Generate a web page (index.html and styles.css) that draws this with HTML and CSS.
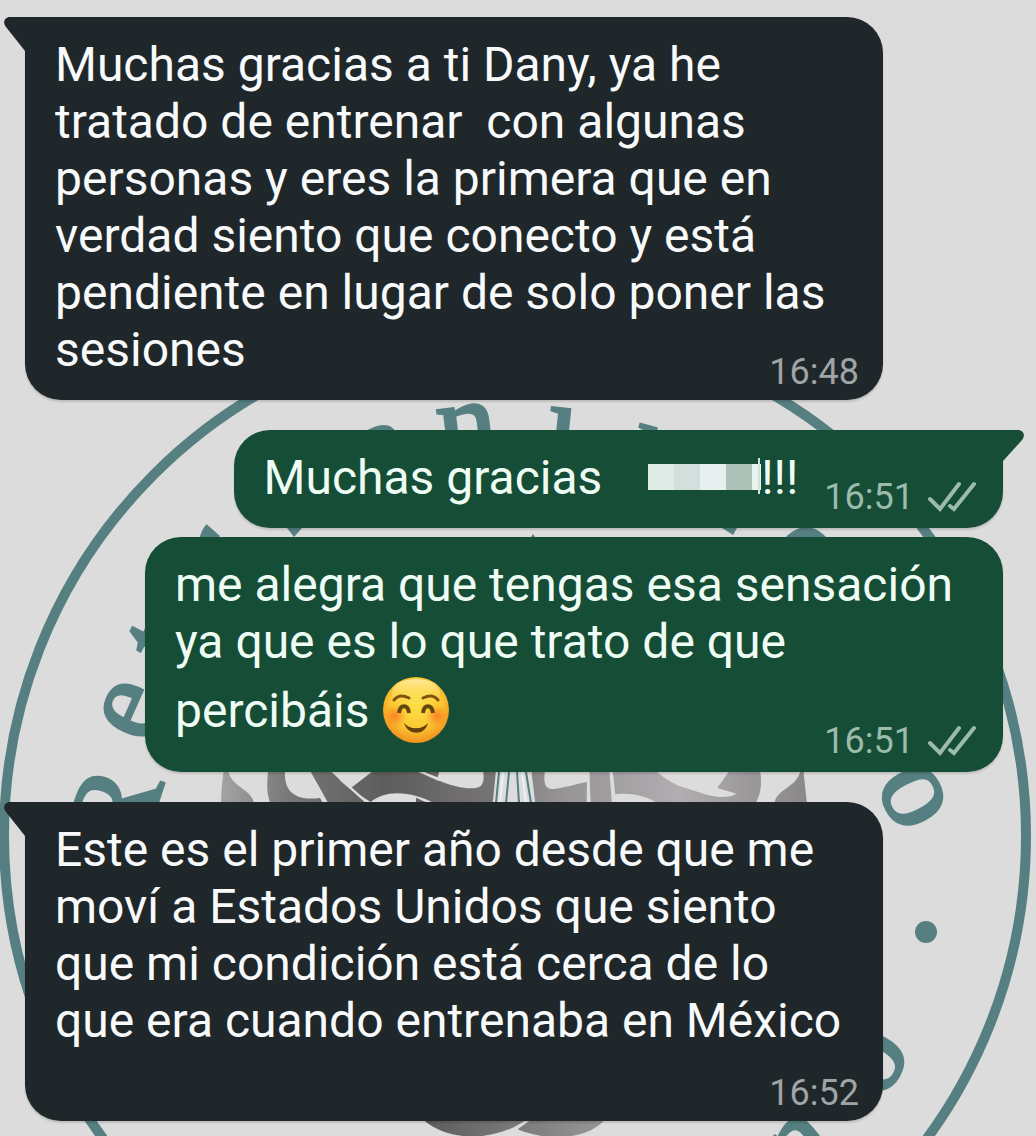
FILE: index.html
```html
<!DOCTYPE html>
<html lang="es">
<head>
<meta charset="utf-8">
<meta name="viewport" content="width=device-width, initial-scale=1">
<title>Chat</title>
<link rel="stylesheet" href="styles.css">
</head>
<body>
<svg class="wallpaper" viewBox="0 0 1036 1136" preserveAspectRatio="xMidYMin slice" aria-hidden="true">
  <defs>
    <linearGradient id="knot" gradientUnits="userSpaceOnUse" x1="60" y1="0" x2="1830" y2="0">
      <stop offset="0" stop-color="#a5a4a5"/>
      <stop offset=".12" stop-color="#777"/>
      <stop offset=".28" stop-color="#5d5d5c"/>
      <stop offset=".46" stop-color="#777475"/>
      <stop offset=".58" stop-color="#969495"/>
      <stop offset=".78" stop-color="#b1adb1"/>
      <stop offset="1" stop-color="#898788"/>
    </linearGradient>
    <linearGradient id="knot-base" gradientUnits="userSpaceOnUse" x1="130" y1="0" x2="670" y2="0">
      <stop offset="0" stop-color="#5c5c5b"/>
      <stop offset="1" stop-color="#989697"/>
    </linearGradient>
  </defs>
  <circle class="ring" cx="515" cy="836" r="511"/>
  <circle class="ink" cx="926" cy="932" r="11"/>
  <g class="letters">
    <text y="30" transform="translate(123 812) rotate(-72)">R</text>
    <text y="27" transform="translate(134 711) rotate(-66)">e</text>
    <text y="27" transform="translate(168 648) rotate(-62)">t</text>
    <text y="27" transform="translate(216 560) rotate(-48)">r</text>
    <text y="27" transform="translate(384 456) rotate(-20)">a</text>
    <text y="27" transform="translate(468 435) rotate(-7)">n</text>
    <text y="27" transform="translate(562 437) rotate(6)">ı</text>
    <text y="27" transform="translate(650 456) rotate(16)">r</text>
    <text y="27" transform="translate(803 558) rotate(42)">o</text>
    <text y="27" transform="translate(912 797) rotate(62)">o</text>
    <text y="27" transform="translate(874 1062) rotate(-60)">o</text>
    <text y="27" transform="translate(802 1150) rotate(-40)">n</text>
  </g>
  <path class="ink" d="M287 528L294 537L302 528Z M722 528L733 535L737 528Z M531 537L533 534L535 537Z"/>
  <g transform="translate(200 760) scale(.333333)" fill="url(#knot)">
    <path d="M72 30H85C90 82 160 88 162 132H63C64 90 67 55 72 30Z"/>
    <path d="M205 30H255C250 100 290 122 360 114L370 132H212C198 98 201 62 205 30Z"/>
    <path d="M325 30H393L425 66L503 132H382C370 96 345 64 325 30Z"/>
    <path d="M518 34H655L718 62C770 84 824 92 843 77C853 65 852 48 849 30H888L878 132H707C635 92 555 88 512 126L450 86Z"/>
    <path d="M665 34H718L713 52ZM648 113L690 132H648Z"/>
    <path d="M994 30H1035C1030 70 1034 88 1060 87C1090 84 1130 72 1161 66L1160 132H1006Z"/>
    <path d="M1165 30H1228L1236 132H1172Z"/>
    <path d="M1238 30H1365C1400 62 1430 75 1450 82L1522 105C1570 116 1612 114 1625 82C1633 64 1632 48 1630 30H1680C1688 76 1680 110 1665 132H1376C1336 106 1290 98 1246 103Z"/>
    <path d="M1555 30H1655L1620 104L1552 84L1590 30Z"/>
    <path d="M1802 30H1810L1821 132H1724C1724 88 1790 86 1802 30Z"/>
    <path class="gap" d="M655 32L718 60M325 30L382 132M393 30L510 136M1165 30L1168 132"/>
  </g>
  <path class="rays" d="M499 772L496 803M509 772L506 803M517 772L519 803M526 772L531 803"/>
  <path d="M503 772L500 803M522 772L526 803" class="rays rays--fine"/>
  <g transform="translate(380 1080) scale(.333333)" fill="url(#knot-base)">
    <path d="M130 120H438C350 182 215 190 130 120Z"/>
    <path d="M452 120H674C620 180 500 185 413 148Z"/>
  </g>
</svg>

<main class="chat">
  <article class="bubble bubble--in bubble--tail">
    <svg class="tail" viewBox="0 0 22 34" aria-hidden="true"><path d="M22 0H6C1 0-2 5 2 10L21 34H22Z"/></svg>
    <p class="text">Muchas gracias a ti Dany, ya he tratado de entrenar&nbsp; con algunas personas y eres la primera que en verdad siento que conecto y está pendiente en lugar de solo poner las sesiones</p>
    <div class="meta"><time datetime="16:48">16:48</time></div>
  </article>

  <article class="bubble bubble--out bubble--tail bubble--row group">
    <svg class="tail" viewBox="0 0 22 34" aria-hidden="true"><path d="M0 0H16C21 0 24 5 20 10L1 31H0Z"/></svg>
    <p class="text">Muchas gracias <span class="redacted"></span>!!!</p>
    <div class="meta"><time datetime="16:51">16:51</time>
      <svg class="ticks" viewBox="0 0 48 32" role="img" aria-label="Entregado"><path d="M2 18L12 28L31 3M22 25L26 28L46 3"/></svg>
    </div>
  </article>

  <article class="bubble bubble--out">
    <p class="text">me alegra que tengas esa sensación ya que es lo que trato de que percibáis <svg class="emoji" viewBox="0 0 66 66" role="img" aria-label="Cara sonriente">
      <defs>
        <radialGradient id="face" cx=".5" cy=".4" r=".62"><stop offset="0" stop-color="#fde047"/><stop offset=".6" stop-color="#fbc934"/><stop offset="1" stop-color="#f28b1c"/></radialGradient>
        <linearGradient id="shine" x1="0" y1="0" x2="0" y2="1"><stop offset="0" stop-color="#fff3b8" stop-opacity=".8"/><stop offset="1" stop-color="#fde047" stop-opacity="0"/></linearGradient>
        <radialGradient id="blush"><stop offset="0" stop-color="#fa7420" stop-opacity=".85"/><stop offset="1" stop-color="#fa8a20" stop-opacity="0"/></radialGradient>
      </defs>
      <circle cx="33" cy="33" r="33" fill="url(#face)"/>
      <ellipse cx="33" cy="16" rx="24" ry="14" fill="url(#shine)"/>
      <circle cx="12" cy="39" r="12" fill="url(#blush)"/>
      <circle cx="54" cy="39" r="12" fill="url(#blush)"/>
      <path class="brow" d="M11 23C15 18 20 18 26 21M40 21C46 18 51 18 55 23"/>
      <path class="eye" d="M16 36C17 27 25 27 26 36M40 36C41 27 49 27 50 36"/>
      <path class="mouth" d="M21 46C25 59 42 59 45 46C39 53 27 53 21 46Z"/>
    </svg></p>
    <div class="meta"><time datetime="16:51">16:51</time>
      <svg class="ticks" viewBox="0 0 48 32" role="img" aria-label="Entregado"><path d="M2 18L12 28L31 3M22 25L26 28L46 3"/></svg>
    </div>
  </article>

  <article class="bubble bubble--in bubble--tail bubble--stacked group">
    <svg class="tail" viewBox="0 0 22 34" aria-hidden="true"><path d="M22 0H6C1 0-2 5 2 10L21 34H22Z"/></svg>
    <p class="text">Este es el primer año desde que me moví a Estados Unidos que siento que mi condición está cerca de lo que era cuando entrenaba en México</p>
    <div class="meta"><time datetime="16:52">16:52</time></div>
  </article>
</main>
</body>
</html>
```
FILE: styles.css
```css
* { box-sizing: border-box; }

body {
  position: relative;
  min-height: 100vh;
  margin: 0;
  background: #dcdcdc;
  font-family: Roboto, "Liberation Sans", sans-serif;
  overflow-x: hidden;
}

/* Club crest behind the conversation */
.wallpaper {
  position: absolute;
  inset: 0;
  z-index: -1;
  width: 100%;
  height: 100%;
}
.ring { fill: none; stroke: #557f80; stroke-width: 10; }
.ink { fill: #557f80; }
.letters {
  fill: #557f80;
  stroke: #557f80;
  stroke-width: 3;
  font: 120px "Liberation Serif", serif;
  text-anchor: middle;
}
.gap { fill: none; stroke: #dcdcdc; stroke-width: 7; }
.rays { fill: none; stroke: #557f80; stroke-width: 2; }
.rays--fine { stroke: #f0f0f0; }

.chat {
  display: flex;
  flex-direction: column;
  align-items: flex-start;
  gap: 9px;
  padding: 17px 33px 15px 25px;
}

.bubble {
  position: relative;
  display: grid;
  max-width: 858px;
  padding: 19px 24px 7px 30px;
  border-radius: 36px;
  box-shadow: 0 2px 2px rgba(0, 0, 0, .14);
}
.bubble--in { background: #20272a; color: #f7f9fb; }
.bubble--out { align-self: flex-end; background: #154d37; color: #eefcf4; }
.bubble--in.bubble--tail { border-top-left-radius: 0; }
.bubble--out.bubble--tail { border-top-right-radius: 0; }
.bubble--tail.group { margin-top: 21px; }

.tail { position: absolute; top: 0; width: 22px; height: 34px; }
.bubble--in .tail { right: 100%; margin-right: -1px; fill: #20272a; }
.bubble--out .tail { left: 100%; margin-left: -1px; fill: #154d37; }

.text,
.meta { grid-area: 1 / 1; }

.text {
  margin: 0;
  padding-bottom: 15px;
  font-size: 48px;
  line-height: 57px;
}

.meta {
  display: flex;
  align-self: end;
  justify-self: end;
  align-items: center;
  gap: 14px;
  font-size: 36px;
  line-height: 42px;
}
.bubble--in .meta { color: #9fa4a6; }
.bubble--out .meta { padding: 0 3px 3px 0; color: #9cbbab; }

.bubble--row .text { padding-right: 26px; }
.bubble--row .meta { grid-area: 1 / 2; }
.bubble--stacked .meta { grid-area: 2 / 1; margin-top: 8px; }

.ticks { width: 48px; height: 32px; }
.ticks path { fill: none; stroke: currentColor; stroke-width: 4; stroke-linecap: round; }

.redacted {
  position: relative;
  display: inline-block;
  width: 113px;
  height: 26px;
  margin-left: 34px;
  background: linear-gradient(90deg, #dfebe6 26px, #d3dfdc 26px 52px, #e7f0ee 52px 78px, #adc1b9 78px 104px, #e8f4ef 104px);
  vertical-align: 4px;
}
.redacted::after {
  content: "";
  position: absolute;
  right: 1px;
  top: -6px;
  width: 2px;
  height: 36px;
  background: #d3e3db;
}

.emoji { width: 66px; height: 66px; margin: 7px 2px; vertical-align: -23px; }
.brow { fill: none; stroke: #805313; stroke-width: 3; stroke-linecap: round; }
.eye { fill: none; stroke: #65480f; stroke-width: 4; }
.mouth { fill: #65400c; }
```
